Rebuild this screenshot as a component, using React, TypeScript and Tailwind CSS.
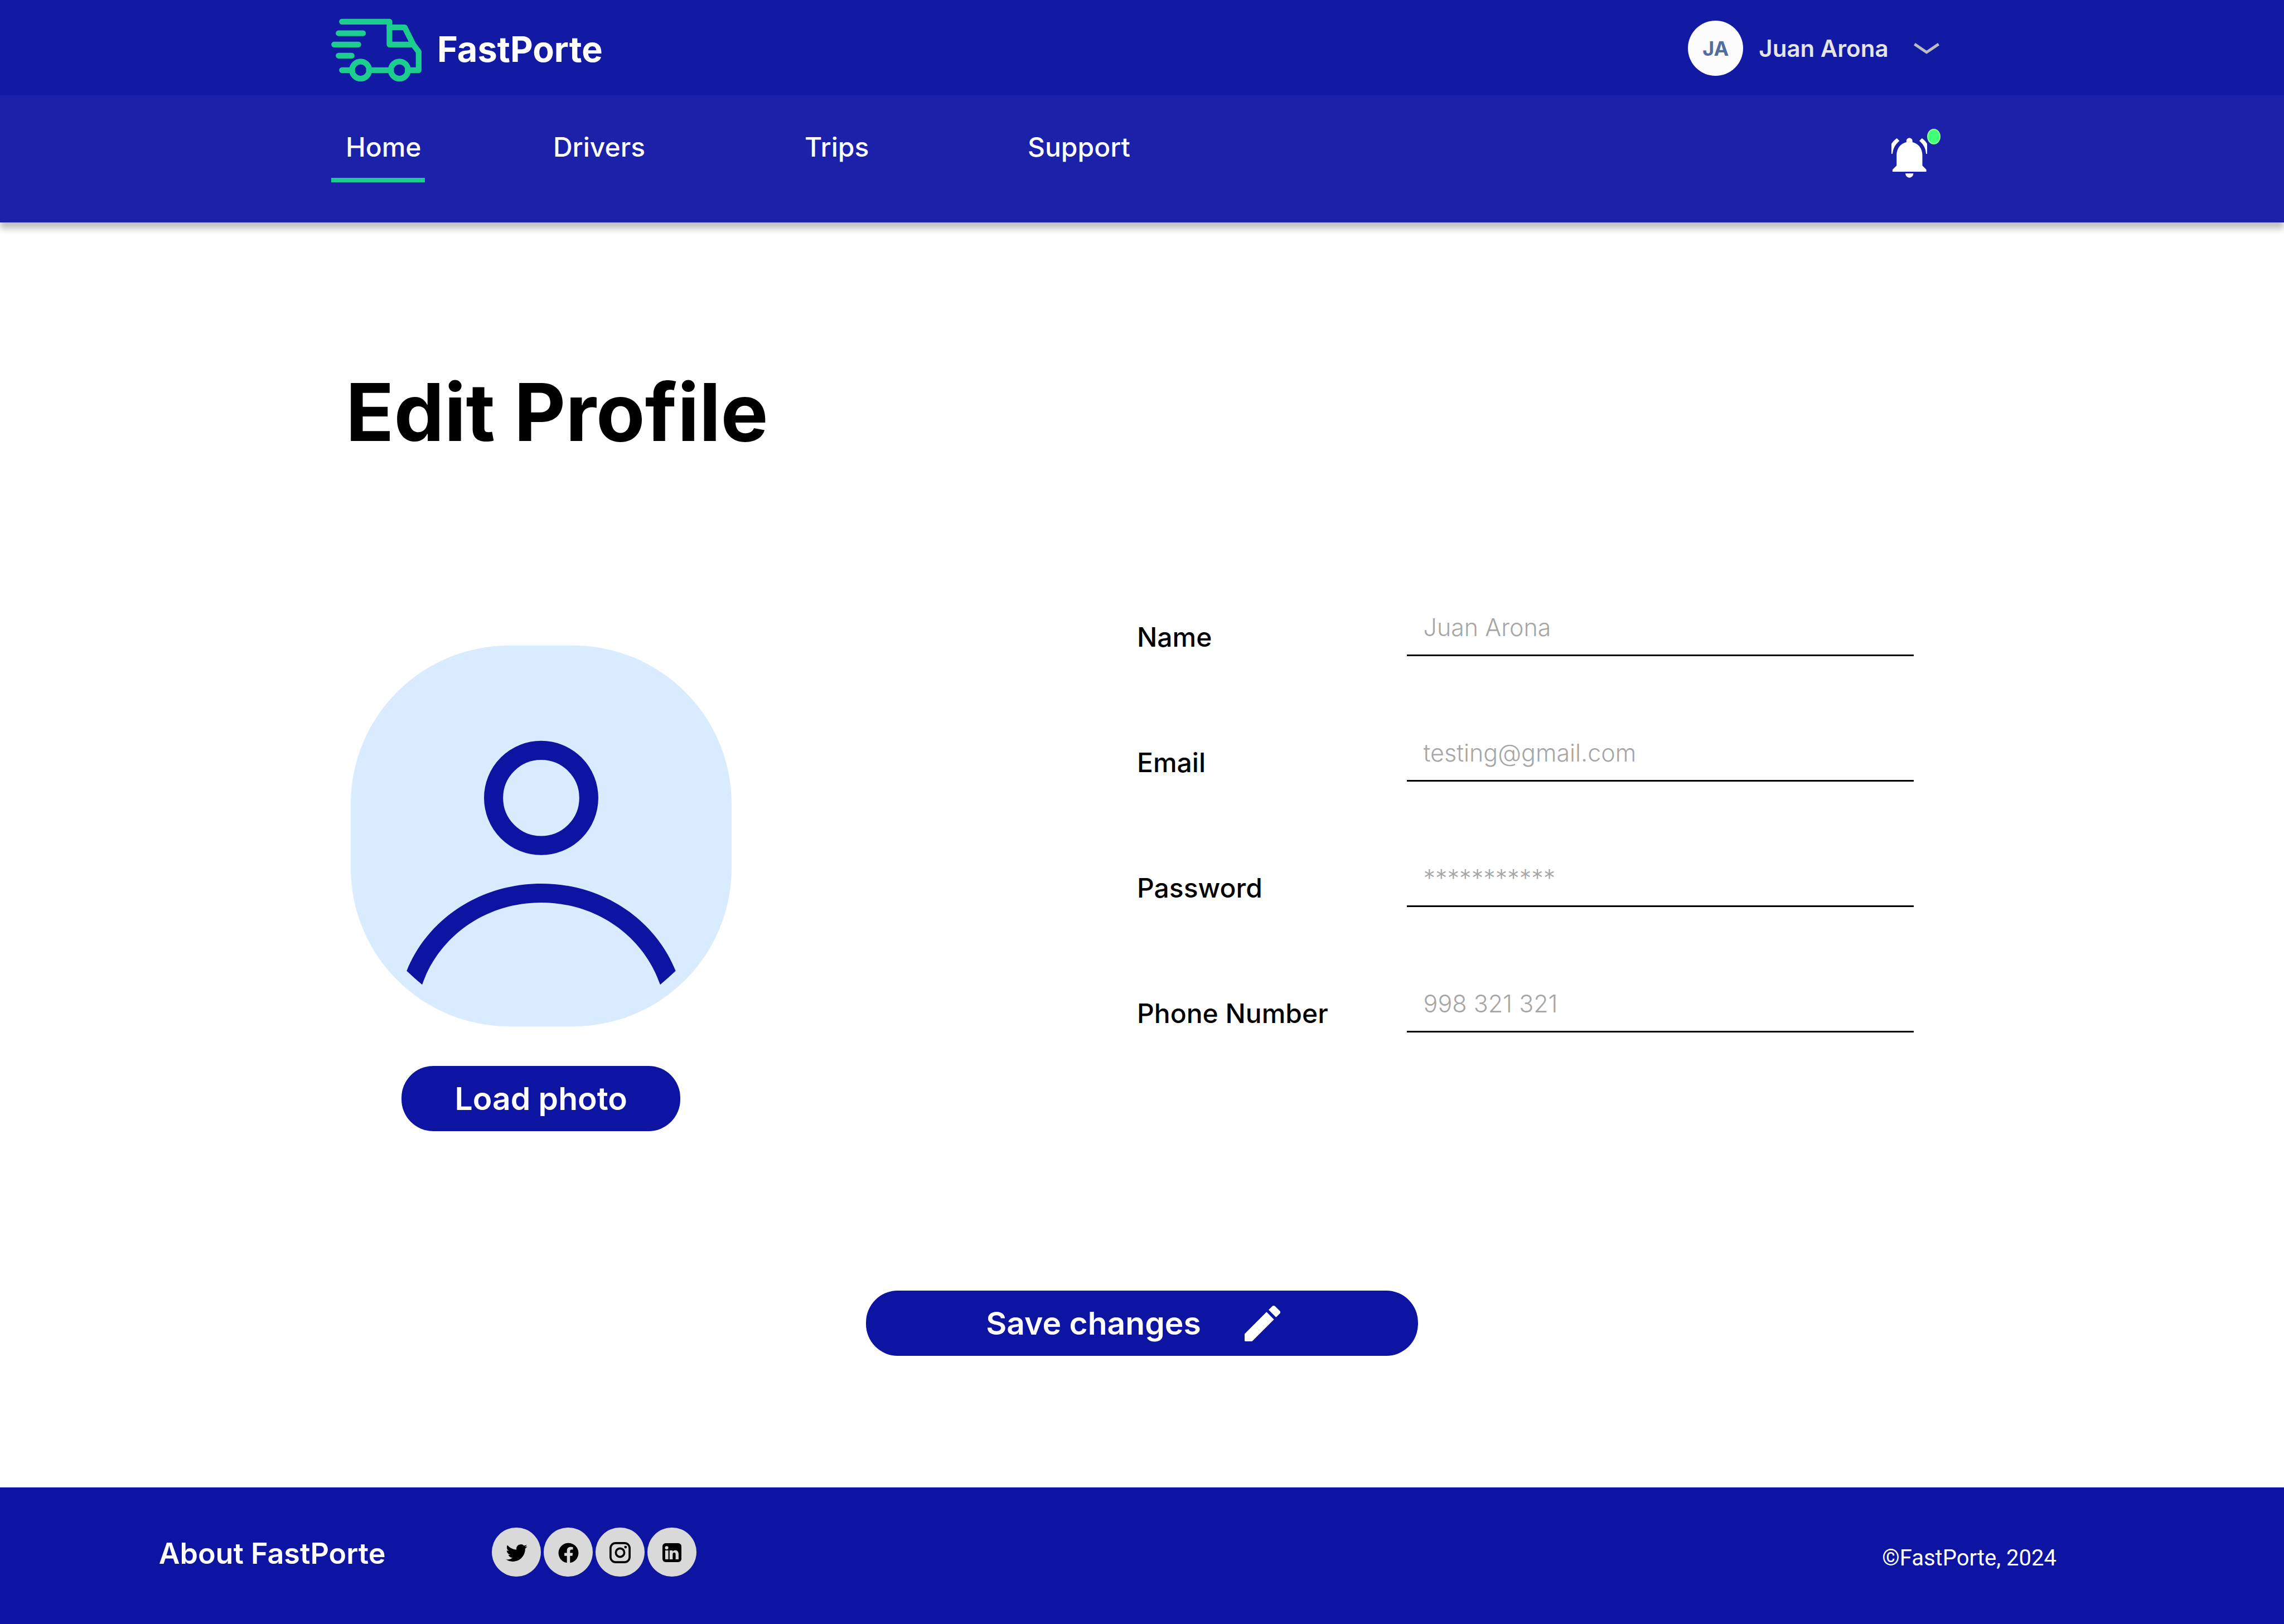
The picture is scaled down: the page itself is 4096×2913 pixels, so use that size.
import type { ReactNode } from "react";
import { IoLogoFacebook, IoLogoTwitter } from "react-icons/io5";

function TruckLogo() {
  return (
    <svg
      viewBox="0 0 228 160"
      className="h-[114px] w-[162px]"
      fill="none"
      stroke="#1dcd8f"
      strokeWidth="14.4"
      strokeLinecap="round"
      strokeLinejoin="round"
      aria-hidden="true"
    >
      <path d="M27 8H147V65.7H207" />
      <path d="M147 22.5H185.5L207 65.7L220.7 84V130.4H193" />
      <path d="M27 130.4H53M95 130.4H151" />
      <path d="M18.6 37.4H80.3M7.4 65.7H68.5M18.6 94H51.7" />
      <circle cx="74.2" cy="130.4" r="21.7" />
      <circle cx="172.2" cy="130.4" r="21.7" />
    </svg>
  );
}

function BellIcon() {
  return (
    <svg viewBox="0 0 90 101" className="h-[72px] w-[64px]" fill="#fff" aria-hidden="true">
      <path d="M45.300 0.500c-4.300 0-7.600 3.300-7.600 7.600V11C23 14.500 13 27 13 43.700V70.300L2.700 80.300V85.700H88V80.300L78 70.300V43.700C78 27 68 14.500 53 11V8.100c0-4.300-3.400-7.600-7.700-7.600z" />
      <path d="M35.300 90h20c0 6-4.300 10.600-10 10.600s-10-4.600-10-10.600z" />
      <path d="M13.700 1.300L20.300 8C9.800 16.500 4 27 2.700 40.700H0V15.300C3.500 10 8 5.300 13.700 1.300z" />
      <path d="M76.900 1.300L70.300 8C80.800 16.500 86.600 27 87.300 40.700H90V15.300C87 10 82.500 5.300 76.900 1.300z" />
    </svg>
  );
}

function PencilIcon() {
  return (
    <svg viewBox="3 3 18 18" className="size-16" fill="#fff" aria-hidden="true">
      <path d="M3 17.250v3.350q0 .4 .4 .4h3.350L17.810 9.940l-3.750-3.750L3 17.250zM20.710 7.040a1 1 0 0 0 0-1.410l-2.340-2.340a1 1 0 0 0-1.410 0l-1.830 1.830 3.750 3.750 1.830-1.830z" />
    </svg>
  );
}

function InstagramIcon() {
  return (
    <svg
      viewBox="0 0 18 18"
      className="size-[38px]"
      fill="none"
      stroke="currentColor"
      strokeWidth="1.750"
      aria-hidden="true"
    >
      <rect x="0.900" y="0.900" width="16.200" height="16.200" rx="4.300" />
      <circle cx="9" cy="9" r="3.600" />
      <circle cx="13.650" cy="4.300" r="1.150" fill="currentColor" stroke="none" />
    </svg>
  );
}

function LinkedinIcon() {
  return (
    <svg viewBox="0 0 18 18" className="size-[34px]" aria-hidden="true">
      <rect width="18" height="18" rx="3" fill="currentColor" />
      <g fill="#d9d9d9">
        <circle cx="4" cy="4.400" r="1.600" />
        <path d="M2.600 6.900H5.600V15.300H2.600z" />
        <path d="M6.800 6.900H9.700V7.900C10.400 7.100 11.200 6.700 12.100 6.700C14.300 6.700 15.300 8.200 15.300 10.500V15.300H12.500V10.700C12.500 9.500 12 8.900 11.100 8.900C10.200 8.900 9.700 9.600 9.700 10.700V15.300H6.800z" />
      </g>
    </svg>
  );
}

function Avatar() {
  return (
    <svg
      viewBox="0 0 960 960"
      className="size-[683px] rounded-[284px] bg-[#d9ebff]"
      role="img"
      aria-label="Profile photo"
    >
      <circle cx="480" cy="384" r="120" fill="none" stroke="#0d14a2" strokeWidth="48" />
      <path
        fill="#0d14a2"
        d="M141 820C193 690 326 600 480 600S767 690 819 820Q800 838 780 855C738 733 620 648 480 648S222 733 180 855Q160 838 141 820z"
      />
    </svg>
  );
}

const navItems = [
  { label: "Home", box: "w-[168px] pl-[26px]", active: true },
  { label: "Drivers", box: "w-[221px]", active: false },
  { label: "Trips", box: "w-[170px]", active: false },
  { label: "Support", box: "w-auto", active: false },
];

const fields = [
  { id: "name", label: "Name", type: "text", placeholder: "Juan Arona" },
  { id: "email", label: "Email", type: "email", placeholder: "testing@gmail.com" },
  { id: "password", label: "Password", type: "password", placeholder: "***********" },
  { id: "phone", label: "Phone Number", type: "tel", placeholder: "998 321 321" },
];

const socials: { name: string; icon: ReactNode }[] = [
  { name: "Twitter", icon: <IoLogoTwitter /> },
  { name: "Facebook", icon: <IoLogoFacebook /> },
  { name: "Instagram", icon: <InstagramIcon /> },
  { name: "LinkedIn", icon: <LinkedinIcon /> },
];

function Header() {
  return (
    <header className="relative text-white shadow-[0_11px_11px_rgba(0,0,0,0.25)]">
      <div className="flex h-[171px] items-center justify-between bg-[#121aa3] pt-[2px] pr-[15.1%] pl-[14.5%]">
        <a href="#home" className="flex items-center gap-[28px] pt-[6px]">
          <TruckLogo />
          <span className="pb-1 text-[63px] leading-[76px] font-bold">FastPorte</span>
        </a>
        <button type="button" className="flex items-center">
          <span className="flex size-[99px] items-center justify-center rounded-full bg-[#fcfcfc] text-[36px] font-bold text-[#526d9e]">
            JA
          </span>
          <span className="ml-7 text-[42px] font-semibold text-[#e5e5e5]">Juan Arona</span>
          <svg
            viewBox="0 0 46 20"
            className="ml-[45px] h-5 w-[46px]"
            fill="none"
            stroke="#bdbdbd"
            strokeWidth="5"
            aria-hidden="true"
          >
            <path d="M1.400 2.100L23 16.800L44.600 2.100" />
          </svg>
        </button>
      </div>
      <div className="flex h-[228px] justify-between bg-[#1c21a9] pt-14 pr-[15.1%] pl-[14.5%]">
        <nav aria-label="Main" className="flex items-start gap-[230px]">
          {navItems.map((item) => (
            <a
              key={item.label}
              href={`#${item.label.toLowerCase()}`}
              aria-current={item.active ? "page" : undefined}
              className={`border-b-8 pb-[18px] text-[48px] leading-[74px] font-medium ${item.box} ${
                item.active ? "border-[#1dcd8f]" : "border-transparent"
              }`}
            >
              {item.label}
            </a>
          ))}
        </nav>
        <button
          type="button"
          aria-label="Notifications"
          className="relative mt-5 mr-[22px] h-[72px]"
        >
          <BellIcon />
          <span className="absolute -top-4 -right-6 h-7 w-6 rounded-[50%] border-2 border-[#8cff8a] bg-[#40ff76]" />
        </button>
      </div>
    </header>
  );
}

function ProfileForm() {
  return (
    <form className="flex flex-1 flex-col pt-[265px]" onSubmit={(e) => e.preventDefault()}>
      <h1 className="pl-[15.13%] text-[143px] leading-[150px] font-bold">Edit Profile</h1>
      <div className="flex items-start justify-between pt-[263px] pr-[16.2%] pl-[15.35%]">
        <div className="mt-[81px] flex flex-col items-center gap-[71px]">
          <Avatar />
          <button
            type="button"
            className="h-[117px] w-[500px] rounded-[57px] bg-[#0d14a2] text-[57px] font-semibold text-white"
          >
            Load photo
          </button>
        </div>
        <div className="flex w-[49.7%] flex-col gap-[125px]">
          {fields.map((field) => (
            <div key={field.id} className="flex h-[100px] items-end">
              <label htmlFor={field.id} className="flex-1 text-[48px] leading-[68px] font-medium">
                {field.label}
              </label>
              <input
                id={field.id}
                type={field.type}
                placeholder={field.placeholder}
                className="h-[100px] w-[65.3%] border-b-[3px] border-black px-[30px] pb-[2px] text-[43px] font-light outline-none placeholder:text-[#a6a6a6]"
              />
            </div>
          ))}
        </div>
      </div>
      <button
        type="submit"
        className="mt-[286px] flex h-[117px] w-[990px] items-center justify-center gap-[78px] self-center rounded-[57px] bg-[#0d14a2] pr-8 text-[57px] font-semibold text-white"
      >
        Save changes
        <PencilIcon />
      </button>
    </form>
  );
}

function Footer() {
  return (
    <footer className="flex h-[245px] items-center bg-[#0d14a2] pr-[9.96%] pb-[14px] pl-[6.95%] text-white">
      <a href="#about" className="pt-[6px] text-[52px] font-semibold">
        About FastPorte
      </a>
      <ul className="ml-[191px] flex gap-[5px]">
        {socials.map((social) => (
          <li key={social.name}>
            <a
              href={`#${social.name.toLowerCase()}`}
              aria-label={social.name}
              className="flex size-[88px] items-center justify-center rounded-full bg-[#d9d9d9] pt-[3px] text-[41px] text-black"
            >
              {social.icon}
            </a>
          </li>
        ))}
      </ul>
      <p className="ml-auto pt-[22px] font-[Roboto,sans-serif] text-[40px]">©FastPorte, 2024</p>
    </footer>
  );
}

export default function App() {
  return (
    <div className="flex min-h-screen flex-col bg-white font-[Inter,sans-serif] text-black">
      <Header />
      <main className="flex flex-1 flex-col">
        <ProfileForm />
      </main>
      <Footer />
    </div>
  );
}
